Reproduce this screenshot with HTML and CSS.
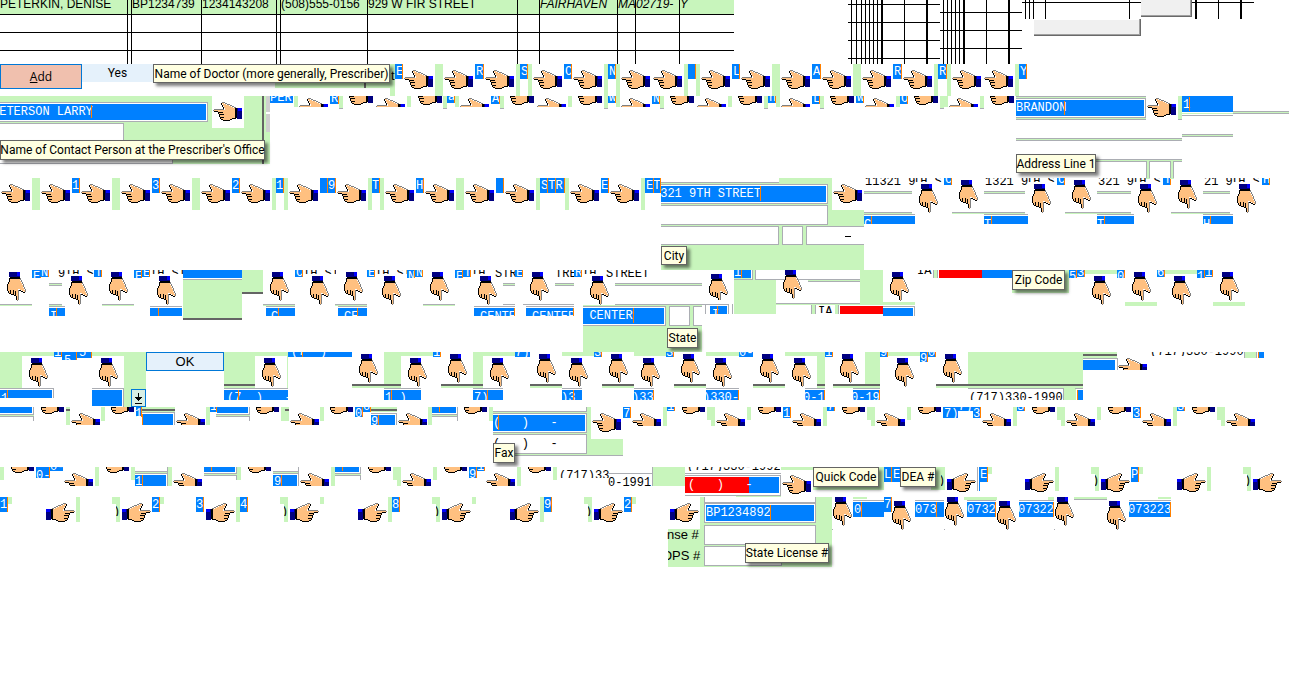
FILE: index.html
```
<!DOCTYPE html>
<html lang="en">
<head>
<meta charset="utf-8">
<title>Prescriber entry sprites</title>
<link rel="stylesheet" href="styles.css">
</head>
<body>
<svg class="defs" aria-hidden="true">
  <symbol id="hand" viewBox="0 0 29 19">
    <path fill="#ffc080" d="M1 8h11V6h-1V4h-1V2H9V1h2v1h2v1h3v1h2v1h2v1h2v10h-3v1h-2v1H9v-1H8v-2H7v-2H6v-2H5v-2H1z"/>
    <path fill="#808080" d="M1 7h10v1H1zM9 0h3v1H9zM12 1h2v1h-2zM14 2h3v1h-3zM17 3h2v1h-2zM19 4h2v1h-2zM21 5h2v1h-2zM0 8h1v1H0z"/>
    <path fill="#000" d="M8 1h1v2H8zM9 3h1v2H9zM10 5h1v2h-1zM1 9h4v1H1zM5 10h5v1H5zM5 11h1v1H5zM6 12h5v1H6zM6 13h1v2H6zM7 15h4v1H7zM7 16h1v1H7zM8 17h2v1H8zM10 18h7v1h-7zM17 17h2v1h-2zM19 16h4v1h-4zM22 6h2v10h-2z"/>
    <path fill="#000080" d="M24 6h5v11h-5z"/>
    <path fill="#0000ff" d="M25 6h4v3h-4z"/>
  </symbol>
</svg>
<main class="sheet">
  <section class="band top" data-band="A">
    <table class="records">
      <colgroup><col class="c-name"><col class="c-gap"><col class="c-dea"><col class="c-npi"><col class="c-gap"><col class="c-phone"><col class="c-street"><col class="c-suite"><col class="c-city"><col class="c-state"><col class="c-zip"><col class="c-flag"></colgroup>
      <tbody>
        <tr class="filled"><td>PETERKIN, DENISE</td><td></td><td>BP1234739</td><td>1234143208</td><td></td><td>(508)555-0156</td><td>929 W FIR STREET</td><td></td><td class="slant">FAIRHAVEN</td><td class="slant">MA</td><td class="slant">02719-</td><td class="slant">Y</td></tr>
        <tr><td></td><td></td><td></td><td></td><td></td><td></td><td></td><td></td><td></td><td></td><td></td><td></td></tr>
        <tr><td></td><td></td><td></td><td></td><td></td><td></td><td></td><td></td><td></td><td></td><td></td><td></td></tr>
        <tr class="last"><td></td><td></td><td></td><td></td><td></td><td></td><td></td><td></td><td></td><td></td><td></td><td></td></tr>
      </tbody>
    </table>
  </section>
  <section class="band letters" data-band="B">
    <button class="add" type="button"><u>A</u>dd</button><button class="yes" type="button">Yes</button>
  </section>
  <section class="band contact" data-band="C"></section>
  <section class="band address" data-band="D"></section>
  <section class="band city" data-band="E"></section>
  <section class="band phone" data-band="F"></section>
  <section class="band fax" data-band="G"></section>
  <section class="band codes" data-band="H"></section>
  <section class="band license" data-band="I"></section>
</main>
<script src="sprites.js"></script>
</body>
</html>
```
FILE: styles.css
```
* { box-sizing: border-box; }
body { margin: 0; background: #fff; color: #000; font: 12px/12px "Liberation Sans", Arial, sans-serif; }
.defs { position: absolute; width: 0; height: 0; }
.sheet { display: flex; flex-direction: column; overflow: hidden; }
.band { position: relative; display: flex; align-items: flex-start; overflow: hidden; }
.top { min-height: 64px; }
.letters { min-height: 32px; }
.contact { min-height: 82px; }
.address { min-height: 92px; }
.city { min-height: 82px; }
.phone { min-height: 55px; }
.fax { min-height: 60px; }
.codes { min-height: 30px; }
.license { min-height: 202px; }

.records { table-layout: fixed; width: 734px; border-spacing: 0; }
.records td { height: 18px; padding: 0; border-right: 1px solid #000; border-bottom: 1px solid #000; white-space: nowrap; overflow: visible; }
.records td:last-child { border-right: 0; }
.records .filled td { height: 15px; padding-bottom: 5px; background: #c8f5bc; line-height: 9px; }
.records .last td { height: 13px; border-bottom: 0; }
.records .slant { font-style: italic; }
.c-name { width: 128px; }
.c-gap { width: 4px; }
.c-dea { width: 70px; }
.c-npi { width: 75px; }
.c-phone { width: 87px; }
.c-street { width: 150px; }
.c-suite { width: 22px; }
.c-city { width: 78px; }
.c-state { width: 18px; }
.c-zip { width: 44px; }
.c-flag { width: 54px; }

button { margin: 0; padding: 0; border: 1px solid #0078d7; border-radius: 0; color: #000; background: #e5f1fb; font: 12px/14px "Open Sans", sans-serif; }
.add { width: 82px; height: 25px; background: #f0c0ae; }
.yes { width: 71px; height: 18px; border: 0; font: 12px/14px Roboto, sans-serif; }
.ok { font: 13px/14px "Liberation Sans", sans-serif; }
.drop { background: #d8efe4; }
.drop svg { display: block; margin: 0 auto; }

.piece, .glove { position: absolute; overflow: hidden; }
.glove svg { display: block; }
.piece span { position: absolute; white-space: pre; font: 12px/12px "Liberation Mono", monospace; }
.green { background: #c8f5bc; }
.sill { background: #c8f5bc; border-bottom: 1px solid #abadb3; }
.blue, .keyed { background: #0080ff; color: #fff; }
.keyed { border-right: 1px solid #ff8000; }
.gray { background: #abadb3; }
.dark { background: #646464; }
.black { background: #000; }
.white { background: #fff; }
.pale { background: #cfcfcf; }
.red { background: #f00; }
.caret { background: #ff8000; }
.light { color: #fff; }
.label span { font: 13px/14px "Liberation Sans", sans-serif; }
.raised { background: #f0f0f0; border: solid #696969; border-width: 0 1px 1px 0; box-shadow: inset -1px -1px #a0a0a0, inset 0 1px #fff; }
.field { position: absolute; margin: 0; border: 1px solid #abadb3; border-radius: 0; padding: 1px; background: #fff; color: #000; font: 12px/14px "Liberation Mono", monospace; }
.picked { color: #fff; background: #0080ff; box-shadow: inset 0 0 0 1px #fff; }
.tip { position: absolute; display: flex; align-items: center; justify-content: center; border: 1px solid #646464; background: #ffffe1; font: 12px/16px Roboto, sans-serif; white-space: nowrap; box-shadow: 3px 3px 3px rgba(0, 0, 0, 0.5); z-index: 2; }
```
FILE: sprites.js
```
const HAND = { L: [29, 19, ''], R: [29, 19, 'matrix(-1 0 0 1 29 0)'], D: [19, 29, 'matrix(0 -1 -1 0 19 29)'] };
const CLASS = { g: 'green', G: 'sill', b: 'blue', B: 'keyed', a: 'gray', d: 'dark', k: 'black', w: 'white', p: 'pale', r: 'red', o: 'caret', t: 'ink', s: 'light', n: 'label', u: 'raised' };
// How far a field reaches under the left edge of its strip.
const REACH = { f: 2, f0: 2, fs: 10 };

// Each entry: kind x y width height [text-x text-y text], in sheet pixels.
const BANDS = {
A: [0, `
k 848 4 92 1;k 848 22 92 1;k 848 40 92 1;k 848 58 92 1
k 851 0 1 64;k 856 0 1 64;k 861 0 1 64;k 865 0 1 64;k 869 0 1 64;k 873 0 1 64;k 877 0 1 64;k 881 0 2 64;k 904 0 1 64;k 926 0 2 64
k 940 12 82 1;k 940 30 82 1;k 940 48 82 1
k 943 0 1 64;k 947 0 1 64;k 951 0 1 64;k 955 0 1 64;k 959 0 1 64;k 963 0 2 64;k 986 0 1 64;k 1008 0 2 64
k 1022 2 119 1;k 1192 2 62 1;k 1025 0 1 19;k 1029 0 1 19;k 1033 0 1 19;k 1045 0 1 19;k 1129 0 1 19;k 1195 0 2 19;k 1218 0 1 19;k 1240 0 2 19
u 1141 -1 51 18;u 1034 19 107 17`],
B: [64, `
g 275 83 120 5;d 364 82 2 6;g 390 64 5 32;n 391 68 4 16 0 1 t
T 153 64 237 19 Name of Doctor (more generally, Prescriber)
L 404 70;L 444 70;L 485 70;L 533 70;L 573 70;L 621 70;L 653 70;L 701 70;L 741 70;L 781 70;L 822 70;L 862 70;L 903 70;L 952 70;L 984 70
B 395 64 8 15 1 2 E;B 475 64 9 15 1 2 R;B 520 64 8 15 1 2 S;B 564 64 8 15 1 2 C;B 608 64 8 15 1 2 N;B 688 64 8 15;B 732 64 8 15 1 2 L;B 812 64 9 15 1 2 A;B 893 64 9 15 1 2 R;B 938 64 9 15 1 2 R;B 1019 64 8 15 1 2 Y
g 435 64 8 32;g 516 64 4 32;g 528 64 4 32;g 604 64 4 32;g 616 64 4 32;g 684 64 4 32;g 696 64 4 32;g 772 64 8 32;g 853 64 8 32;g 934 64 4 32;g 947 64 4 32;g 1015 64 4 32`],
C: [96, `
g 0 96 266 68;d 262 96 2 68;p 266 96 4 16;p 266 114 4 18;g 266 132 4 32
i -10 102 218 20 PETERSON LARRY;o 91 105 1 13
j -2 123 126 20;j -2 155 175 9
w 212 96 32 32;L 213 102
T 0 140 265 20 Name of Contact Person at the Prescriber's Office
b 270 96 23 7 0 -4 PER;g 294 96 4 11
L 299 98 9;L 376 98 9;L 460 98 9;L 537 98 9;L 621 98 9;L 697 98 9;L 781 98 9;L 865 98 9;L 949 98 9
L 344 86;L 413 86;L 505 86;L 573 86;L 665 86;L 733 86;L 825 86;L 909 86;L 985 86
B 330 96 9 8 1 -3 R;B 447 96 8 7 1 -5 a;B 491 96 9 8 1 -3 A;B 608 96 8 7 1 -4 w;B 652 96 8 8 1 -3 N;B 768 96 8 7 1 -4 n;B 812 96 8 8 1 -3 L;B 856 96 8 7 1 -4 w;B 900 96 8 8 1 -3 O
G 339 96 4 13;g 407 96 4 11;G 443 96 4 13;g 455 96 4 11;G 500 96 4 13;g 568 96 4 11;G 604 96 4 13;g 616 96 4 11;G 660 96 4 13;g 728 96 4 11;G 764 96 4 13;g 776 96 4 11;G 820 96 4 13;g 896 96 4 11;G 940 96 4 13;g 944 96 4 11;G 980 96 4 13
g 1016 96 130 24;a 1016 96 130 1;f 1016 98 130 20 BRANDON;o 1064 101 1 14;a 1016 119 130 1
L 1147 98;G 1178 96 4 24
b 1182 96 51 16 1 3 1;o 1189 97 1 14;g 1182 113 51 1;a 1182 115 51 1;a 1233 111 56 1;g 1233 112 56 1;a 1233 113 56 1
a 1182 134 51 1;g 1182 135 51 1;a 1182 136 51 1
a 1016 138 166 1;g 1016 139 166 1;a 1016 140 166 1
a 1096 159 86 1;g 1096 160 86 1;a 1096 161 86 1;g 1146 161 4 17;a 1146 161 1 17;a 1149 161 1 17;g 1170 161 4 17;a 1170 161 1 17;a 1173 161 1 17
T 1016 154 80 19 Address Line 1`],
D: [178, `
L 1 184;L 41 184;L 81 184;L 121 184;L 161 184;L 201 184;L 241 184;L 289 184;L 337 184;L 385 184;L 425 184;L 465 184;L 505 184;L 570 184;L 610 184
g 32 178 8 32;g 112 178 8 32;g 192 178 8 32;g 272 178 4 32;g 284 178 4 32;g 368 178 4 32;g 380 178 4 32;g 456 178 8 32;g 536 178 4 32;g 565 178 4 32;g 641 178 4 32
B 72 178 8 15 0 2 1;B 152 178 8 15 0 2 3;B 232 178 8 15 0 2 2;B 276 178 8 15 0 2 1;B 320 178 16 15 8 2 9;o 327 178 1 15;B 372 178 8 15 0 2 T;B 416 178 8 15 0 2 H;B 496 178 8 15;B 540 178 25 15 1 2 STR;o 547 178 1 15;o 555 178 1 15;B 601 178 8 15 0 2 E;B 645 178 16 15 1 2 ET;o 653 178 1 15
g 661 178 203 92;w 661 178 118 5;a 661 182 118 1
fs 661 184 167 20 1321 9TH STREET;o 760 186 1 15
f0 661 205 167 20;f0 661 226 118 19;j 782 226 21 19;w 807 227 57 17;a 806 226 58 1;a 806 244 58 1;a 806 226 1 19;k 845 236 6 1
w 832 178 32 32;L 833 184
T 661 246 26 19 City
t 864 178 51 9 1 -2 11321 9;t 913 178 31 4 0 -2 TH ST;B 944 178 8 7 1 -4 C
a 864 191 48 1;g 864 192 48 1;a 864 193 48 1;a 864 212 48 1;g 864 213 48 1;a 864 214 51 1;b 864 216 51 8 0 3 C;o 871 216 1 8;D 919 184;D 959 180;a 952 212 32 1;g 952 213 32 1
t 984 178 44 9 1 -2 1321 9;t 1026 178 31 4 0 -2 TH ST;B 1057 178 8 7 1 -4 C
a 984 191 41 1;g 984 192 41 1;a 984 193 41 1;a 984 212 41 1;g 984 213 41 1;a 984 214 44 1;b 984 216 44 8 0 3 T;o 991 216 1 8;D 1032 184;D 1072 180;a 1065 212 32 1;g 1065 213 32 1
t 1097 178 37 9 1 -2 321 9;t 1132 178 31 4 0 -2 TH ST;B 1163 178 8 7 1 -4 T
a 1097 191 34 1;g 1097 192 34 1;a 1097 193 34 1;a 1097 212 34 1;g 1097 213 34 1;a 1097 214 37 1;b 1097 216 37 8 0 3 T;o 1104 216 1 8;D 1138 184;D 1178 180;a 1171 212 32 1;g 1171 213 32 1
t 1203 178 30 9 1 -2 21 9;t 1231 178 31 4 0 -2 TH ST;B 1262 178 8 7 1 -4 H
a 1203 191 27 1;g 1203 192 27 1;a 1203 193 27 1;a 1203 212 27 1;g 1203 213 27 1;a 1203 214 30 1;b 1203 216 30 8 0 3 H;o 1210 216 1 8;D 1237 184;g 1146 178 4 1;g 1170 178 4 1`],
E: [270, `
D 7 272;D 69 276;D 109 272;D 157 276;D 270 272;D 310 276;D 344 272;D 382 276;D 430 272;D 478 276;D 530 272;D 590 276;D 709 274
B 32 270 9 8 1 1 E;B 40 270 9 7 1 -3 N;B 94 270 8 7 1 -3 T;B 134 270 8 8 1 1 E;B 142 270 8 7 1 -3 E;b 183 270 59 8;B 295 270 8 7 1 -3 C;B 367 270 8 7 1 -3 E;B 407 270 8 8 1 1 N;B 415 270 8 7 1 -3 N;B 455 270 8 8 1 1 E;B 463 270 8 7 1 -3 T;B 515 270 8 7 1 -3 E;B 574 270 8 7 1 -3 R
t 58 270 8 9 0 -2 9;t 65 270 29 4 0 -2 TH ST;t 150 270 33 4 0 -2 TH ST;t 303 270 33 4 0 -2 TH ST;t 375 270 32 4 0 -2 TH ST;t 471 270 24 4 0 -2 TH;t 495 270 20 9 0 -2 STR;t 555 270 19 9 0 -2 TRE;t 582 270 24 4 0 -2 TH;t 606 270 50 9 0 -2 STREET
a 183 279 59 1;g 183 280 59 39;d 183 318 59 2;g 242 270 21 22;d 242 292 21 2
a 0 304 32 1;g 0 305 32 1;a 49 283 13 1;g 49 284 13 1;a 49 285 13 1;a 49 304 13 1;g 49 305 13 1;a 102 304 32 1;g 102 305 32 1
a 49 306 16 1;b 49 308 16 8 1 3 I;o 56 308 1 8;a 150 306 32 1;b 150 308 32 8;o 158 308 1 8;a 263 304 32 1;g 263 305 32 1;a 266 306 29 1;b 266 308 29 8 5 3 C;o 278 308 1 8
a 335 304 32 1;g 335 305 32 1;a 338 306 29 1;b 338 308 29 8 6 3 CE;o 357 308 1 8;a 423 304 32 1;g 423 305 32 1
a 503 283 12 1;g 503 284 12 1;a 503 285 12 1;a 503 304 12 1;a 474 306 41 1;B 474 308 41 8 6 3 CENTE;a 523 304 51 1;a 555 283 19 1;g 555 284 19 1;a 555 285 19 1;a 526 306 48 1;B 526 308 48 8 6 3 CENTER
a 615 283 87 1;g 615 284 87 1;a 615 285 87 1;a 615 304 87 1;g 583 305 119 47;fs 583 306 83 20 E CENTER;o 633 308 1 15;j 669 306 21 20;j 693 306 30 20
w 702 300 32 52;a 702 304 27 1;a 705 304 1 10;a 728 304 1 10;b 710 306 17 8 2 3 I;o 717 306 1 8;a 732 304 1 10
T 667 328 31 20 State
g 734 270 145 44;b 734 270 17 8 0 -3 1;o 741 270 1 8;w 751 270 1 9;a 752 270 1 9;a 734 279 19 1
w 755 270 105 9;a 755 279 105 1;a 755 270 1 9;w 776 280 84 23;a 808 281 52 1;g 808 280 52 1;a 776 303 84 1;D 783 270
w 734 314 42 1;w 776 305 35 9;a 811 305 1 9;w 815 305 20 9;a 815 305 1 9;t 818 305 16 8 0 1 IA;w 838 305 45 9;a 838 305 1 9
r 840 306 43 8;g 860 270 55 35;w 883 270 32 32;D 890 272;b 883 308 30 8;a 883 306 32 1;a 914 306 1 10
t 917 270 16 5 0 -5 IA;g 933 270 5 8;a 933 270 1 8;a 937 270 1 8;r 939 270 43 8;b 982 270 30 8;g 1012 270 57 23
T 1012 270 53 20 Zip Code
B 1069 270 8 8 0 1 5;B 1077 270 8 7 0 -3 3;B 1117 270 8 8 0 1 0;B 1157 270 8 7 0 -3 6;B 1197 270 8 8 0 1 1;B 1205 270 8 7 0 -3 1
g 1085 270 32 4;g 1125 302 32 4;g 1165 270 32 4;g 1213 302 32 4;D 1092 276;D 1132 272;D 1172 276;D 1220 272`],
F: [352, `
g 0 352 146 4;g 0 352 22 36;w 92 356 32 32;g 124 352 22 55;D 29 358;D 99 358
B 54 352 8 5 0 -5 1;B 62 352 15 8 2 3 5;B 77 352 15 6 2 -5 5
a 0 388 54 1;b 0 390 52 8 1 3 1;o 7 390 1 8;a 53 388 1 10;a 92 388 32 1;b 92 390 30 16;a 123 388 1 19
ok 146 352 78 19 OK;drop 131 389 15 18 
g 224 352 64 36;w 255 356 32 32;d 224 384 31 2;D 262 358;a 224 388 64 1;b 224 390 64 10 3 2 (7  )   -;o 238 390 1 10
b 288 352 64 5 3 -6 (7  );o 302 352 1 5
g 384 352 17 36;g 352 386 49 2;d 352 384 49 2;w 352 352 32 32;D 359 354;g 401 352 32 4;D 408 358;a 384 388 37 1;b 384 390 37 10 1 2 1 );o 391 390 1 10
B 433 352 8 5 0 -5 1;D 448 354;g 473 352 10 36;g 441 386 42 2;d 441 384 42 2;g 483 352 32 4;D 490 358;a 473 388 30 1;b 473 390 30 10 1 2 7);o 487 390 1 10
b 515 352 15 5 0 -5 7);D 537 354;d 530 384 32 2;g 530 386 32 2;g 562 352 32 4;D 569 358;a 562 388 20 1;b 562 390 20 10 -1 2 )3;o 573 390 1 10
B 594 352 8 5 0 -5 3;D 609 354;d 602 384 32 2;g 602 386 32 2;g 634 352 32 4;D 641 358;a 634 388 20 1;B 634 390 20 10 -2 2 )33
B 666 352 8 5 0 -5 3;D 681 354;d 674 384 32 2;g 674 386 32 2;g 706 352 33 4;D 713 358;a 706 388 33 1;B 706 390 33 10 -3 2 )330-
b 739 352 14 5 0 -5 0-;D 760 354;d 753 384 32 2;g 753 386 32 2;g 785 352 32 4;g 817 352 8 36;d 817 384 8 2;D 792 358;a 805 388 20 1;B 805 390 20 10 -2 2 0-1
B 825 352 8 5 0 -5 1;D 840 354;d 833 384 47 2;g 833 386 47 2;g 865 352 15 32;a 853 388 27 1;B 853 390 27 10 -2 2 0-19
B 880 352 8 5 0 -5 9;g 888 352 32 4;D 895 358;B 920 352 8 10 0 1 9;B 928 352 8 5 0 -5 0;D 943 354
g 968 352 115 48;g 936 386 32 2;d 936 384 147 2;a 968 388 96 1;w 968 389 95 11;a 1063 388 1 12;t 969 390 94 10 0 2 (717)330-1990;a 1075 388 8 1;w 1076 389 7 11;o 1077 390 1 10;b 1078 390 5 10
d 1083 354 34 2;g 1083 352 34 2;g 1083 356 34 2;a 1083 358 34 1;b 1083 360 32 10;a 1117 358 1 12;L 1118 358 12
t 1150 352 94 4 0 -6 (717)330-1990;g 1244 352 13 6;a 1244 352 1 6;a 1256 352 1 6;o 1258 352 1 6;b 1259 352 5 6`],
G: [407, `
b 0 407 32 6;a 33 407 1 8;a 0 414 34 1;g 0 415 34 1;a 0 416 34 1;a 33 416 1 5
L 35 395;L 105 395;L 250 395;L 324 395;L 458 395;L 676 395;L 752 395;L 836 395;L 912 395;L 1026 395;L 1102 395;L 1186 395
g 66 407 4 18;d 66 409 4 2;g 101 407 4 14;B 136 407 6 10 -1 1 1;g 142 407 33 5;d 142 409 33 2;a 142 412 33 1;a 174 412 1 13;b 142 414 31 11;o 142 414 1 11;g 206 407 4 18
B 210 407 7 5 0 -6 1;b 217 407 31 6;a 249 407 1 14;a 216 414 34 1;g 216 415 34 1;a 216 416 34 1
g 281 407 8 14;d 285 409 4 2;g 320 407 4 14;B 355 407 8 10 0 1 0;B 363 407 8 5 0 -6 0;g 371 407 26 5;d 371 409 26 2;a 371 413 26 1;b 371 415 24 10 0 1 9;o 378 415 1 10;a 396 413 1 12;g 428 407 4 18
b 432 407 24 6;o 439 407 1 5;a 457 407 1 14;a 432 414 25 1;g 432 415 25 1;a 432 416 25 1
L 71 413 12;L 176 413 12;L 290 413 12;L 398 413 12;L 632 413 13;L 716 413 13;L 792 413 13;L 876 413 13;L 982 413 13;L 1066 413 13;L 1142 413 13;L 1226 413 13
g 489 407 4 14;g 493 407 98 49;w 493 407 93 4;a 493 411 94 1;a 586 407 1 4;g 591 439 32 17;a 493 455 130 1
f 493 413 94 20 (   )   -;o 498 415 1 15
f0 493 434 94 20 (   )   -
L 592 413;T 493 443 22 20 Fax
B 623 407 8 11 0 1 7;g 663 407 4 19;B 667 407 8 4 0 -6 1;g 707 407 8 13;g 711 407 4 19;g 747 407 4 13;B 783 407 8 11 0 1 1;g 823 407 4 19;B 827 407 8 4 0 -6 7;g 867 407 8 13;g 871 407 4 19;g 907 407 4 13
b 943 407 15 11 1 1 7);b 958 407 15 4 0 -6 7);B 973 407 8 11 0 1 3;g 1013 407 4 19;B 1017 407 8 4 0 -6 3;g 1057 407 8 13;g 1061 407 4 19;g 1097 407 4 13;B 1133 407 8 11 0 1 3;g 1173 407 4 19;B 1177 407 8 4 0 -6 3;g 1217 407 8 13;g 1221 407 4 19`],
H: [467, `
L 5 454;L 100 454;L 242 454;L 362 454;L 438 454;L 522 454
L 64 473 13;L 173 473 13;L 300 473 13;L 402 473 13;L 486 473 13
g 0 467 4 13;g 95 467 4 19;g 131 467 4 13;g 168 467 4 19;g 237 467 4 13;g 331 467 4 19;g 393 467 8 13;g 397 467 4 19;g 433 467 4 13;g 517 467 4 19;g 553 467 4 13
B 36 467 14 11 0 3 0-;b 50 467 13 4 0 -6 0-;a 135 471 33 1;g 135 472 33 1;a 167 467 1 19;a 135 473 33 1;b 135 475 31 11 0 1 1;o 142 475 1 11
b 204 467 31 5;o 211 467 1 4;a 236 467 1 13;a 204 473 33 1;g 204 474 33 1;a 204 475 33 1
a 273 471 26 1;g 273 472 26 1;a 273 473 26 1;b 273 475 24 11 1 1 9;o 281 475 1 11;a 298 467 1 19
b 335 467 24 5;o 342 467 1 4;a 360 467 1 13;a 335 473 26 1;g 335 474 26 1;a 335 475 26 1
B 469 467 8 11 0 2 9;B 477 467 8 4 0 -6 1
t 560 467 50 11 -1 3 (717)33;a 608 473 45 1;a 652 467 1 19;t 608 476 44 10 0 1 0-1991;g 653 467 32 19
w 685 467 95 5;t 687 467 93 4 0 -6 (717)330-1992;a 685 473 96 1;g 781 467 32 3
a 685 475 96 1;a 780 475 1 20;r 685 477 64 16;b 749 477 30 16;s 685 477 94 16 3 2 (   )   -;a 685 495 96 1;g 736 496 45 1;L 782 475
g 813 467 71 23;T 813 467 66 20 Quick Code
B 884 467 8 15 0 2 L;b 892 467 8 15 1 2 E;T 900 467 36 20 DEA #
g 931 467 14 23;t 941 474 4 12 -3 1 );R 947 473;a 977 467 1 24;b 979 467 1 24;B 980 467 8 15 0 2 E;g 988 467 4 7
R 1025 473;g 1055 467 4 24;g 1091 467 8 7;g 1095 467 4 24;t 1095 474 4 12 -3 1 );R 1101 473;B 1131 467 8 15 0 2 P;g 1139 467 4 7;R 1177 473;g 1207 467 4 24;g 1243 467 8 7;g 1247 467 4 24;t 1247 474 4 12 -3 1 );R 1253 473`],
I: [497, `
B 0 497 8 15 0 2 1;g 8 497 4 7;R 46 503;g 76 497 4 25;g 112 497 8 7;g 116 497 4 25;t 116 504 4 12 -3 2 );R 122 503;B 152 497 8 15 0 2 2;g 160 497 4 7
B 196 497 8 15 0 2 3;R 206 503;g 236 497 4 25;B 240 497 8 15 0 2 4;g 280 497 8 7;g 284 497 4 25;t 284 504 4 12 -3 2 );R 290 503;g 320 497 4 7;R 358 503;g 388 497 4 25;B 392 497 8 15 0 2 8
g 432 497 8 7;g 436 497 4 25;t 436 504 4 12 -3 2 );R 442 503;g 472 497 4 7;R 510 503;g 540 497 4 25;B 544 497 8 15 0 2 9;g 584 497 8 7;g 588 497 4 25;t 588 504 4 12 -3 2 );R 594 503;B 624 497 8 15 0 2 2;g 632 497 4 7;R 670 503
g 700 497 132 70;g 668 529 32 38;w 704 497 112 5;a 704 497 1 5;a 815 497 1 5;a 704 502 112 1
i 704 503 112 20 BP1234892;o 770 505 1 15;j 704 525 112 20;j 704 546 78 20
n 667 528 36 15 0 0 nse #;n 668 549 35 15 -6 0 OPS #
T 745 543 84 20 State License #
D 833 497;D 892 501;D 945 497;D 997 501;D 1055 497;D 1107 501
g 853 497 14 2;a 853 500 31 1;b 853 502 31 15 1 2 0;o 861 502 1 15;B 884 497 8 15 0 2 7
a 915 500 29 1;b 915 502 29 15 0 2 073;o 936 502 1 15;g 964 497 33 3;a 967 500 29 1;B 967 502 29 15 0 2 0732;a 1019 500 35 1;B 1019 502 35 15 -1 2 07322;g 1048 497 6 3
g 1074 497 33 2;a 1074 499 33 1;a 1129 500 42 1;B 1129 502 42 15 -1 2 073223;g 1158 497 13 2;a 832 529 1 1;a 944 529 1 1;a 1054 529 1 1`]
};

function place(el, x, y, w, h) {
  Object.assign(el.style, { left: x + 'px', top: y + 'px', width: w + 'px', height: h + 'px' });
}

function hand(kind, x, y, clip) {
  const [w, h, turn] = HAND[kind];
  const box = document.createElement('div');
  box.className = 'glove';
  place(box, x, y, w, clip || h);
  box.innerHTML = `<svg width="${w}" height="${h}" shape-rendering="crispEdges"><g transform="${turn}"><use href="#hand" width="29" height="19"/></g></svg>`;
  return box;
}

function control(kind, x, y, w, h, text) {
  let el;
  if (kind === 'T') {
    el = document.createElement('div');
    el.className = 'tip';
    el.textContent = text;
  } else if (kind === 'ok' || kind === 'drop') {
    el = document.createElement('button');
    el.type = 'button';
    el.className = 'piece ' + kind;
    if (kind === 'ok') el.textContent = text;
    else {
      el.setAttribute('aria-label', 'Open list');
      el.innerHTML = '<svg width="9" height="11" shape-rendering="crispEdges"><path d="M4 0h1v4h3v1H7v1H6v1H5v1H4V7H3V6H2V5H1V4h3zM1 10h7v1H1z"/></svg>';
    }
  } else {
    el = document.createElement('input');
    el.type = 'text';
    el.value = text;
    el.setAttribute('aria-label', text || 'Empty field');
    el.className = 'field' + (['i', 'f', 'fs'].includes(kind) ? ' picked' : '');
    if (REACH[kind]) {
      const wrap = document.createElement('div');
      wrap.className = 'piece';
      place(wrap, x, y, w, h);
      place(el, -REACH[kind], 0, w + REACH[kind], h);
      wrap.append(el);
      return wrap;
    }
  }
  place(el, x, y, w, h);
  return el;
}

for (const [name, [top, source]] of Object.entries(BANDS)) {
  const band = document.querySelector(`[data-band="${name}"]`);
  for (const item of source.trim().split(/[;\n]/)) {
    const parts = item.split(' ');
    const kind = parts[0];
    const [x, y, w, h] = parts.slice(1, 5).map(Number);
    if (HAND[kind]) { band.append(hand(kind, x, y - top, w)); continue; }
    if (['T', 'ok', 'drop', 'i', 'j'].includes(kind) || REACH[kind]) {
      band.append(control(kind, x, y - top, w, h, parts.slice(5).join(' ')));
      continue;
    }
    const el = document.createElement('div');
    el.className = 'piece ' + (CLASS[kind] || '');
    place(el, x, y - top, w, h);
    if (parts.length > 7) {
      const ink = document.createElement('span');
      ink.textContent = parts.slice(7).join(' ');
      Object.assign(ink.style, { left: parts[5] + 'px', top: parts[6] + 'px' });
      el.append(ink);
    }
    band.append(el);
  }
}
```
